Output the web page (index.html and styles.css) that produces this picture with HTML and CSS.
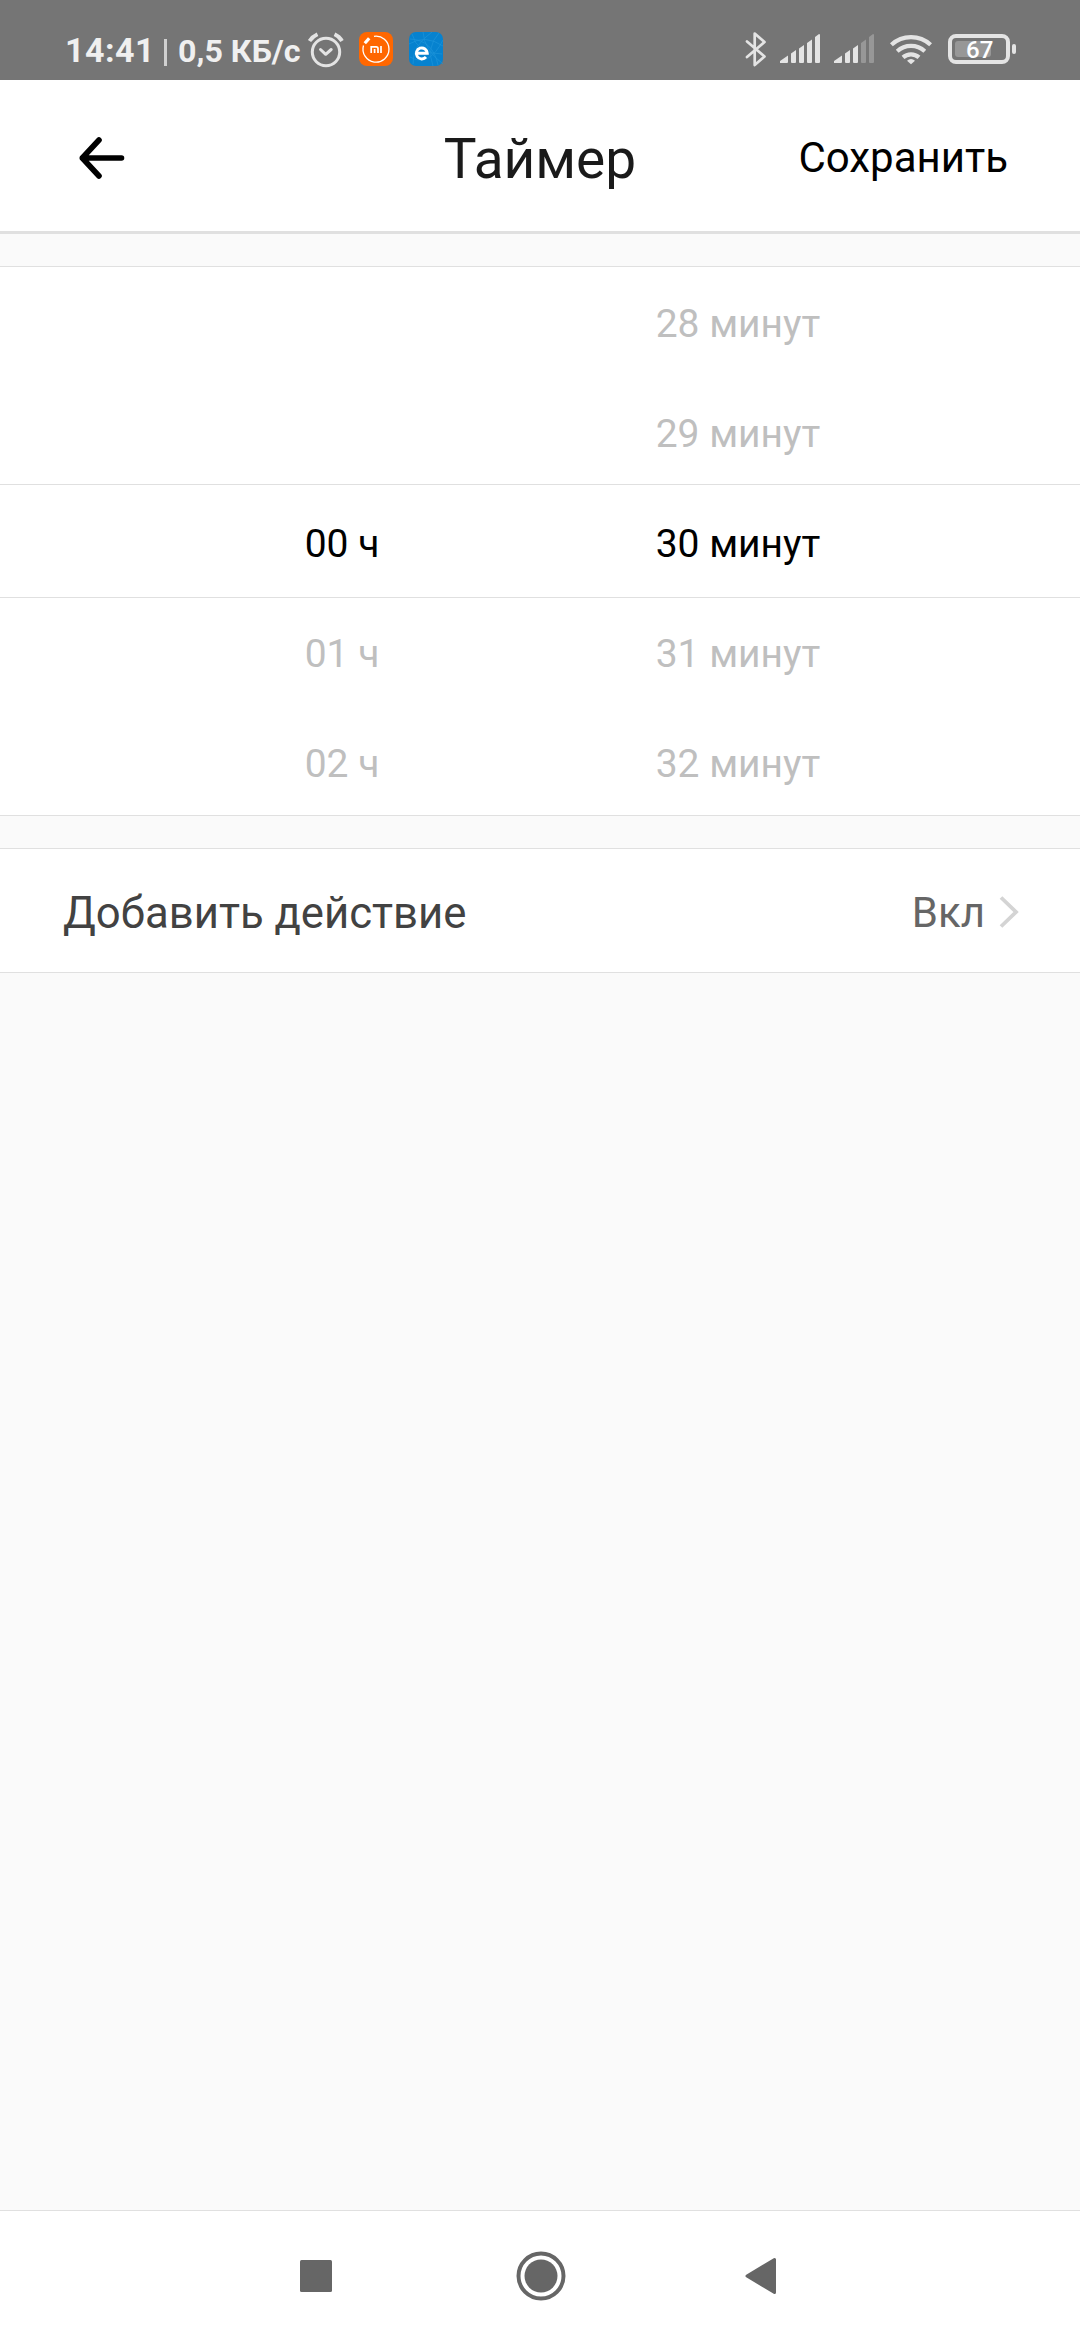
FILE: index.html
```html
<!DOCTYPE html>
<html lang="ru">
<head>
<meta charset="utf-8">
<title>Таймер</title>
<link rel="stylesheet" href="styles.css">
</head>
<body>
<div class="screen">
  <div class="status">
    <span class="clock">14:41</span>
    <span class="divider"></span>
    <span class="speed">0,5 КБ/с</span>
    <svg class="ic-alarm" width="37" height="36" viewBox="307 32 37 36" fill="none" stroke="#e4e4e4" stroke-linecap="round" stroke-linejoin="round">
      <circle cx="326" cy="52" r="13.7" stroke-width="3"/>
      <path d="M320.5 49.5l5.2 4.8 5.5-4.8" stroke-width="3"/>
      <path d="M309.5 41q3-4.500 8-6.700M334.500 34.300q5 2.200 7.500 6.700" stroke-width="3.800" stroke-linecap="butt"/>
    </svg>
    <svg class="ic-mi" width="34" height="34" viewBox="0 0 34 34">
      <rect width="34" height="34" rx="8" fill="#ff6700"/>
      <path d="M15 4.300A13 13 0 1 1 4.500 13.500" fill="none" stroke="#fff" stroke-width="1.300"/>
      <path d="M5.800 11.200l4.400-5" stroke="#fff" stroke-width="3.200"/>
      <path d="M12.200 21v-6.200h5a1.800 1.800 0 0 1 1.800 1.800V21M15.600 17v4M22 14v7" fill="none" stroke="#fff" stroke-width="1.700"/>
    </svg>
    <svg class="ic-e" width="34" height="34" viewBox="0 0 34 34">
      <rect width="34" height="34" rx="7" fill="#0682cf"/>
      <path d="M0 12Q16 2 34 14M3 2Q8 22 33 22M14 0Q15 18 34 32M30 1Q17 15 24 34M1 25Q20 36 34 8M1 7Q24 8 29 33M4 32Q3 14 23 0" fill="none" stroke="#1b92d8" stroke-width=".8"/>
      <path d="M8 21.300H18.300A5.500 5.500 0 1 0 17 25" fill="none" stroke="#fff" stroke-width="2.900"/>
    </svg>
    <span class="spacer"></span>
    <svg class="ic-bt" width="22" height="36" viewBox="745 31 22 36" fill="none" stroke="#e4e4e4" stroke-width="2.700" stroke-linecap="round" stroke-linejoin="round">
      <path d="M747 41.500l17.500 15-9.800 8.500V33.500l9.800 8.500-17.500 15"/>
    </svg>
    <svg class="ic-sig" width="40" height="30" viewBox="0 0 40 30" fill="#e4e4e4">
      <path d="M0 29v-2l8-5.500V28q0 1-1 1zM11 28v-8.500l5-3.500v12q0 1-1 1h-3q-1 0-1-1zM19 28V14.500l5-3.500v17q0 1-1 1h-3q-1 0-1-1zM27 28V9l5-3.500V28q0 1-1 1h-3q-1 0-1-1zM35 28V3l4-3q1 0 1 1v27q0 1-1 1h-3q-1 0-1-1z"/>
    </svg>
    <svg class="ic-sig2" width="40" height="30" viewBox="0 0 40 30" fill="#e4e4e4">
      <path d="M0 29v-2l8-5.500V28q0 1-1 1zM11 28v-8.500l5-3.500v12q0 1-1 1h-3q-1 0-1-1zM19 28V14.500l5-3.500v17q0 1-1 1h-3q-1 0-1-1z"/>
      <path fill="#979797" d="M27 28V9l5-3.500V28q0 1-1 1h-3q-1 0-1-1zM35 28V3l4-3q1 0 1 1v27q0 1-1 1h-3q-1 0-1-1z"/>
    </svg>
    <svg class="ic-wifi" width="44" height="32" viewBox="889 33 44 32" fill="none" stroke="#e4e4e4" stroke-width="4.200">
      <path d="M891.400 44.800a29 29 0 0 1 39.200 0M897.200 51.200a20.500 20.500 0 0 1 27.600 0M903 57.400a12 12 0 0 1 16 0"/>
      <path d="M907 60.700q4-3.500 8 0l-4 3.600z" fill="#e4e4e4" stroke="none"/>
    </svg>
    <span class="battery"><span class="cell"><span class="charge">67</span></span><span class="nub"></span></span>
  </div>

  <header class="header">
    <svg class="back" width="48" height="46" viewBox="78 134 48 46" fill="none" stroke="#000" stroke-width="5.600" stroke-linecap="round" stroke-linejoin="round">
      <path d="M99 139L82.300 157 99 175M82.300 157H121.500"/>
    </svg>
    <h1 class="title">Таймер</h1>
    <span class="save">Сохранить</span>
  </header>

  <section class="picker">
    <div class="band"></div>
    <div class="wheel">
      <span class="row"></span>
      <span class="row"></span>
      <span class="row current">00 ч</span>
      <span class="row">01 ч</span>
      <span class="row">02 ч</span>
    </div>
    <div class="wheel">
      <span class="row">28 минут</span>
      <span class="row">29 минут</span>
      <span class="row current">30 минут</span>
      <span class="row">31 минут</span>
      <span class="row">32 минут</span>
    </div>
  </section>

  <section class="action">
    <span class="label">Добавить действие</span>
    <span class="value">Вкл</span>
    <svg class="chevron" width="20" height="34" viewBox="999 894 20 34" fill="none" stroke="#d4d4d4" stroke-width="3.800">
      <path d="M1001 896.500L1016 911 1001 925.500"/>
    </svg>
  </section>

  <nav class="nav">
    <svg width="32" height="32" viewBox="0 0 32 32"><rect width="32" height="32" rx="1.500" fill="#666"/></svg>
    <svg class="home" width="50" height="50" viewBox="0 0 50 50"><circle cx="25" cy="25" r="22.500" fill="none" stroke="#666" stroke-width="4"/><circle cx="25" cy="25" r="16.500" fill="#666"/></svg>
    <svg width="32" height="38" viewBox="0 0 32 38"><path d="M2 19L29.500 2.500V35.500z" fill="#666" stroke="#666" stroke-width="3" stroke-linejoin="round"/></svg>
  </nav>
</div>
</body>
</html>
```

FILE: styles.css
```css
* { box-sizing: border-box; }
body {
  margin: 0;
  font-family: Roboto, "Noto Sans", sans-serif;
  background: #fafafa;
}
svg { display: block; flex: none; }
.screen {
  width: 1080px;
  height: 2340px;
  display: flex;
  flex-direction: column;
  overflow: hidden;
}
.status {
  height: 80px;
  flex: none;
  display: flex;
  align-items: flex-start;
  padding: 31px 64px 0 65px;
  background: #757575;
  color: #f0f0f0;
  font-weight: 700;
  white-space: nowrap;
}
.clock { width: 99px; font-size: 34px; line-height: 39px; letter-spacing: 0.5px; }
.divider { width: 3px; height: 27px; margin: 8px 10px 0 0; background: #d0d0d0; }
.speed { width: 130px; padding-left: 1px; font-size: 32.2px; line-height: 40px; }
.ic-alarm { margin-top: 1px; }
.ic-mi { margin: 1px 0 0 15px; }
.ic-e { margin: 1px 0 0 16px; }
.spacer { flex: 1; }
.ic-sig { margin: 3px 0 0 13px; }
.ic-sig2 { margin: 3px 0 0 14px; }
.ic-wifi { margin: 2px 0 0 15px; }
.battery { display: flex; align-items: center; gap: 2px; margin: 3px 0 0 15px; }
.cell {
  width: 62px;
  height: 30px;
  padding: 3px;
  border: 4px solid #e4e4e4;
  border-radius: 8px;
}
.charge {
  display: block;
  width: 36px;
  height: 16px;
  padding-left: 11px;
  border-radius: 3px;
  background: #979797;
  color: #fff;
  font-size: 24px;
  font-weight: 500;
  line-height: 18px;
}
.nub { width: 4px; height: 10px; border-radius: 2px; background: #e4e4e4; }

.header {
  height: 154px;
  flex: none;
  display: grid;
  grid-template-columns: 1fr auto 1fr;
  align-items: center;
  padding: 4px 72px 0;
  background: #fff;
  border-bottom: 3px solid #e0e0e0;
}
.back { margin-left: 6px; }
.title {
  margin: 2px 0 0;
  font-size: 55px;
  font-weight: 400;
  line-height: 64px;
  color: #1a1a1a;
}
.save { justify-self: end; font-size: 42px; line-height: 50px; color: #000; }

.picker {
  position: relative;
  display: flex;
  height: 550px;
  flex: none;
  margin-top: 32px;
  padding: 2px 144px 0;
  background: #fff;
  border: solid #e0e0e0;
  border-width: 1px 0;
  overflow: hidden;
}
.band {
  position: absolute;
  top: 217px;
  left: 0;
  right: 0;
  height: 114px;
  border: solid #e0e0e0;
  border-width: 1px 0;
}
.wheel { flex: 1; display: flex; flex-direction: column; align-items: center; }
.row {
  flex: none;
  height: 110px;
  font-size: 39px;
  line-height: 110px;
  color: #bfbfbf;
}
.row.current { color: #000; }

.action {
  display: flex;
  align-items: center;
  height: 125px;
  flex: none;
  margin-top: 32px;
  padding: 3px 61px 0 63px;
  background: #fff;
  border: solid #e0e0e0;
  border-width: 1px 0;
}
.label { flex: 1; padding-top: 2px; font-size: 43.7px; color: #424242; }
.value { font-size: 42px; color: #666; margin-right: 14px; }

.nav {
  display: flex;
  align-items: center;
  justify-content: space-between;
  height: 130px;
  flex: none;
  margin-top: auto;
  padding: 0 303px 0 300px;
  background: #fff;
  border-top: 1px solid #e0e0e0;
}
.home { margin-left: 4px; }
```
